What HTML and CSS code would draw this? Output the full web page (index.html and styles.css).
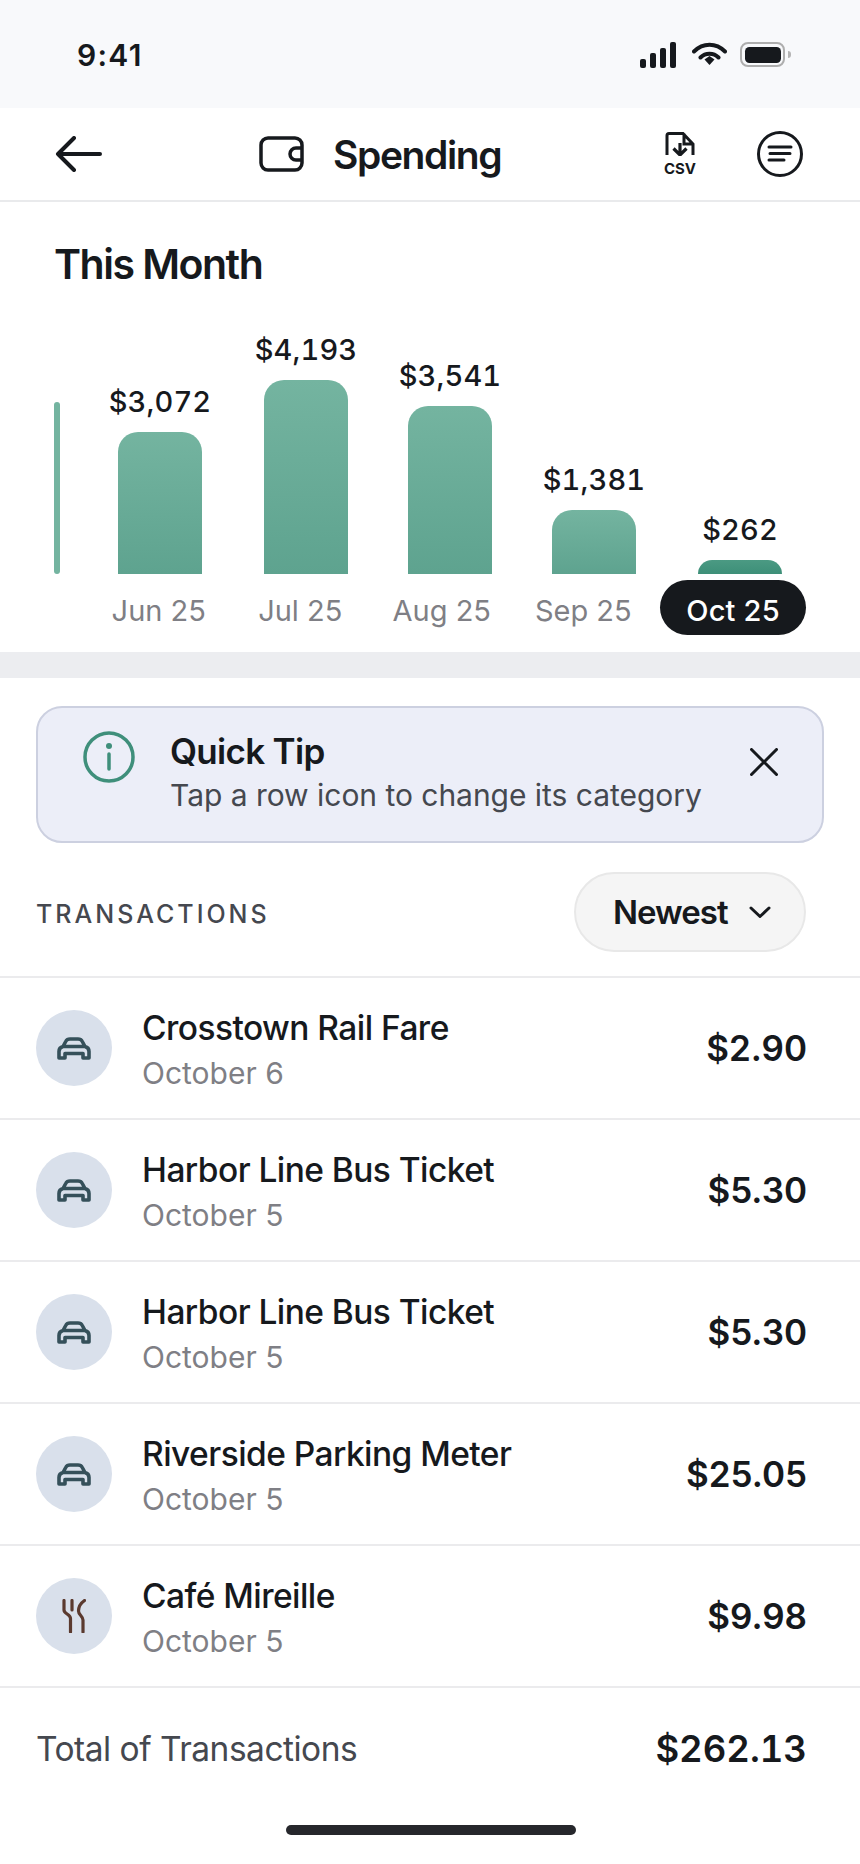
FILE: index.html
```html
<!DOCTYPE html>
<html lang="en">
<head>
<meta charset="utf-8">
<title>Spending</title>
<link rel="stylesheet" href="styles.css">
</head>
<body>
<div class="screen">
  <div class="status">
    <span class="time">9:41</span>
    <div class="status-icons">
      <svg class="sig" width="36" height="26" viewBox="0 0 36 26"><rect x="0" y="17" width="6" height="9" rx="2"/><rect x="10" y="11" width="6" height="15" rx="2"/><rect x="20" y="6" width="6" height="20" rx="2"/><rect x="30" y="0" width="6" height="26" rx="2"/></svg>
      <svg class="wifi" width="35" height="23" viewBox="0 0 35 23"><path d="M2 9.500C11 .5 24 .5 33 9.500M8.500 15.500c5-5 13-5 18 0" fill="none" stroke="#16191d" stroke-width="4" stroke-linecap="round"/><path d="M12.500 17.500l5-3.500 5 3.500-5 5.500z" fill="#16191d"/></svg>
      <div class="batt"><div class="batt-fill"></div></div>
      <div class="batt-nub"></div>
    </div>
  </div>

  <header class="nav">
    <svg class="back" width="47" height="36" viewBox="0 0 47 36"><path d="M45 18H3M19 2 3 18l16 16" fill="none" stroke="#16191d" stroke-width="4" stroke-linecap="round" stroke-linejoin="round"/></svg>
    <svg class="wallet" width="45" height="36" viewBox="0 0 45 36"><rect x="2" y="2" width="41" height="32" rx="7" fill="none" stroke="#16191d" stroke-width="3.500"/><path d="M43 12h-6a6 6 0 0 0 0 12h6" fill="none" stroke="#16191d" stroke-width="3.500"/></svg>
    <h1 class="nav-title">Spending</h1>
    <div class="nav-actions">
      <div class="csv">
        <svg width="30" height="24" viewBox="0 0 30 24"><path d="M2 23V3.500Q2 1.500 4 1.500H18L28 12V23M19 1.500V12H28" fill="none" stroke="#16191d" stroke-width="3"/><path d="M15 11V22M8.500 16.500 15 23l6.500-6.500" fill="none" stroke="#16191d" stroke-width="3.200"/></svg>
        <span class="csv-text">CSV</span>
      </div>
      <svg width="46" height="46" viewBox="0 0 46 46"><circle cx="23" cy="23" r="21.500" fill="none" stroke="#16191d" stroke-width="3"/><path d="M12 16H34M13 22.500H33M12 29H27" fill="none" stroke="#16191d" stroke-width="3" stroke-linecap="round"/></svg>
    </div>
  </header>

  <section class="month">
    <h2 class="month-title">This Month</h2>
    <div class="chart">
      <div class="sliver"></div>
      <div class="col"><span class="val">$3,072</span><div class="bar bar-jun"></div></div>
      <div class="col"><span class="val">$4,193</span><div class="bar bar-jul"></div></div>
      <div class="col"><span class="val">$3,541</span><div class="bar bar-aug"></div></div>
      <div class="col"><span class="val">$1,381</span><div class="bar bar-sep"></div></div>
      <div class="col"><span class="val">$262</span><div class="bar bar-oct"></div></div>
    </div>
    <div class="months">
      <span class="mon">Jun 25</span>
      <span class="mon">Jul 25</span>
      <span class="mon">Aug 25</span>
      <span class="mon">Sep 25</span>
      <span class="mon mon-on">Oct 25</span>
    </div>
  </section>

  <div class="band"></div>

  <div class="tip">
    <svg class="tip-icon" width="52" height="52" viewBox="0 0 52 52"><circle cx="26" cy="26" r="24" fill="none" stroke="#3f8f7b" stroke-width="3.500"/><circle cx="26" cy="15" r="3" fill="#3f8f7b"/><path d="M26 23V38" stroke="#3f8f7b" stroke-width="3.500" stroke-linecap="round"/></svg>
    <div class="tip-body">
      <div class="tip-title">Quick Tip</div>
      <div class="tip-text">Tap a row icon to change its category</div>
    </div>
    <svg class="tip-x" width="28" height="28" viewBox="0 0 28 28"><path d="M1.500 1.500 26.500 26.500M26.500 1.500 1.500 26.500" stroke="#16191d" stroke-width="3" stroke-linecap="round"/></svg>
  </div>

  <div class="tx-head">
    <span class="tx-label">TRANSACTIONS</span>
    <div class="sort">
      <span class="sort-text">Newest</span>
      <svg width="22" height="12" viewBox="0 0 22 12"><path d="M2 2l9 8.500L20 2" fill="none" stroke="#16191d" stroke-width="3" stroke-linecap="round" stroke-linejoin="round"/></svg>
    </div>
  </div>

  <ul class="list">
    <li class="row">
      <div class="ava"><svg width="34" height="23" viewBox="0 0 34 23"><use href="#car"/></svg></div>
      <div class="row-main"><div class="row-name">Crosstown Rail Fare</div><div class="row-date">October 6</div></div>
      <div class="row-amt">$2.90</div>
    </li>
    <li class="row">
      <div class="ava"><svg width="34" height="23" viewBox="0 0 34 23"><use href="#car"/></svg></div>
      <div class="row-main"><div class="row-name">Harbor Line Bus Ticket</div><div class="row-date">October 5</div></div>
      <div class="row-amt">$5.30</div>
    </li>
    <li class="row">
      <div class="ava"><svg width="34" height="23" viewBox="0 0 34 23"><use href="#car"/></svg></div>
      <div class="row-main"><div class="row-name">Harbor Line Bus Ticket</div><div class="row-date">October 5</div></div>
      <div class="row-amt">$5.30</div>
    </li>
    <li class="row">
      <div class="ava"><svg width="34" height="23" viewBox="0 0 34 23"><use href="#car"/></svg></div>
      <div class="row-main"><div class="row-name">Riverside Parking Meter</div><div class="row-date">October 5</div></div>
      <div class="row-amt">$25.05</div>
    </li>
    <li class="row">
      <div class="ava"><svg width="24" height="34" viewBox="0 0 24 34"><path d="M2 1.500V11c0 4 6.500 4 6.500 8.500V33M10 1.500V11M22.500 1.500C17.500 5 16.500 9 16.500 12c0 4 4.500 5 4.500 9V33" fill="none" stroke="#5b3a2f" stroke-width="3.200" stroke-linecap="round"/></svg></div>
      <div class="row-main"><div class="row-name">Café Mireille</div><div class="row-date">October 5</div></div>
      <div class="row-amt">$9.98</div>
    </li>
  </ul>

  <div class="total">
    <span class="total-label">Total of Transactions</span>
    <span class="total-amt">$262.13</span>
  </div>

  <div class="home"></div>
</div>

<svg class="defs" width="0" height="0"><defs><g id="car"><path d="M2 21V14.500Q2 10.500 6 9.500L9 4Q10 2 13 2H21Q24 2 25 4L28 9.500Q32 10.500 32 14.500V21H26V16.500H8V21ZM6 9.500H28" fill="none" stroke="#35505a" stroke-width="3.600" stroke-linejoin="round"/></g></defs></svg>
</body>
</html>
```
FILE: styles.css
```css
* { box-sizing: border-box; }
html, body { margin: 0; padding: 0; background: #fff; }
body { font-family: Inter, "Liberation Sans", sans-serif; color: #16191d; }
h1, h2, ul { margin: 0; padding: 0; }
li { list-style: none; }
.defs { position: absolute; }

.screen { width: 860px; height: 1864px; display: flex; flex-direction: column; overflow: hidden; }

.status { height: 108px; background: #f8f9fb; display: flex; align-items: flex-start; padding: 38px 69px 0 77px; justify-content: space-between; }
.time { font-size: 30px; line-height: 34px; font-weight: 600; letter-spacing: 1.300px; }
.status-icons { display: flex; align-items: flex-start; padding-top: 4px; }
.sig { fill: #16191d; }
.wifi { margin-left: 16px; }
.batt { margin-left: 13px; width: 45px; height: 25px; border: 2.500px solid #aeaeae; border-radius: 8px; padding: 2.500px; }
.batt-fill { height: 100%; background: #16191d; border-radius: 4.500px; }
.batt-nub { width: 3px; height: 7px; margin: 9px 0 0 3px; background: #b5b5b5; border-radius: 0 3px 3px 0; }

.nav { height: 94px; border-bottom: 2px solid #e9eaec; display: flex; align-items: center; padding: 0 57px 0 55px; }
.wallet { margin-left: 157px; }
.nav-title { margin: 2px 0 0 29px; font-size: 39px; line-height: 46px; font-weight: 600; letter-spacing: -1.400px; }
.nav-actions { margin-left: auto; display: flex; align-items: center; gap: 60px; }
.csv { width: 34px; display: flex; flex-direction: column; align-items: center; }
.csv-text { font-size: 15px; line-height: 17px; font-weight: 700; margin-top: 4px; }

.month { height: 450px; display: flex; flex-direction: column; padding-top: 38px; }
.month-title { height: 46px; padding-left: 54px; font-size: 41px; line-height: 48px; font-weight: 600; letter-spacing: -1.500px; }
.chart { height: 288px; display: flex; align-items: flex-end; padding-left: 54px; }
.sliver { width: 6px; height: 172px; background: #74b4a0; border-radius: 3px; margin-right: 58px; }
.col { width: 84px; margin-right: 60px; display: flex; flex-direction: column; align-items: center; }
.col:nth-child(2), .col:nth-child(5) { margin-right: 62px; }
.val { font-size: 29px; line-height: 34px; font-weight: 500; letter-spacing: .15px; font-variant-numeric: tabular-nums; white-space: nowrap; margin-bottom: 13px; }
.bar { width: 84px; border-radius: 20px 20px 0 0; background: linear-gradient(180deg, #74b4a0, #5ea38f); }
.bar-jun { height: 142px; }
.bar-jul { height: 194px; }
.bar-aug { height: 168px; }
.bar-sep { height: 64px; }
.bar-oct { height: 14px; background: linear-gradient(180deg, #4b9a83, #3d8f78); }
.months { margin-top: 6px; display: flex; align-items: center; padding-left: 88px; }
.mon { width: 141.500px; height: 55px; padding-top: 3px; text-align: center; font-size: 29px; line-height: 55px; color: #7f7f85; white-space: nowrap; }
.mon-on { width: 146px; margin-left: 6px; background: #16191d; color: #fff; border-radius: 28px; font-weight: 500; letter-spacing: .2px; }

.band { height: 26px; background: #ecedf0; flex: none; }

.tip { margin: 28px 36px 0; height: 137px; flex: none; background: #eceef8; border: 2px solid #ccd0e0; border-radius: 26px; display: flex; align-items: flex-start; padding: 23px 44px 0 45px; }
.tip-body { margin-left: 35px; }
.tip-title { font-size: 35px; line-height: 40px; font-weight: 600; letter-spacing: -.7px; }
.tip-text { margin-top: 6px; font-size: 30px; line-height: 36px; color: #45484f; letter-spacing: -.03px; }
.tip-x { margin-left: auto; margin-top: 17px; }

.tx-head { height: 133px; flex: none; display: flex; align-items: flex-start; justify-content: space-between; padding: 29px 54px 0 36px; }
.tx-label { margin-top: 27px; font-size: 25px; line-height: 30px; font-weight: 500; letter-spacing: 3px; color: #45484f; }
.sort { width: 232px; height: 80px; background: #f5f5f5; border: 2px solid #e8e8e8; border-radius: 40px; display: flex; align-items: center; padding-left: 37px; gap: 21px; }
.sort-text { font-size: 33px; line-height: 40px; font-weight: 600; letter-spacing: -1px; }

.row { height: 142px; border-top: 2px solid #ebebed; display: flex; align-items: center; padding: 0 53px 0 36px; }
.ava { width: 76px; height: 76px; border-radius: 50%; background: #d9e0eb; display: flex; align-items: center; justify-content: center; flex: none; }
.row-main { margin-left: 30px; padding-top: 2px; }
.row-name { font-size: 33.500px; line-height: 40px; font-weight: 500; letter-spacing: -.55px; }
.row-date { margin-top: 7px; font-size: 30px; line-height: 36px; color: #7f7f85; }
.row-amt { margin-left: auto; font-size: 35px; line-height: 42px; font-weight: 600; }

.total { border-top: 2px solid #ebebed; height: 124px; flex: none; display: flex; align-items: center; justify-content: space-between; padding: 0 53px 0 36px; }
.total-label { font-size: 33.500px; line-height: 40px; color: #45484f; letter-spacing: -.5px; }
.total-amt { font-size: 36.500px; line-height: 44px; font-weight: 600; font-variant-numeric: tabular-nums; }

.home { width: 290px; height: 10px; margin-top: 15px; background: #26272c; border-radius: 5px; align-self: flex-start; margin-left: 286px; }
```
